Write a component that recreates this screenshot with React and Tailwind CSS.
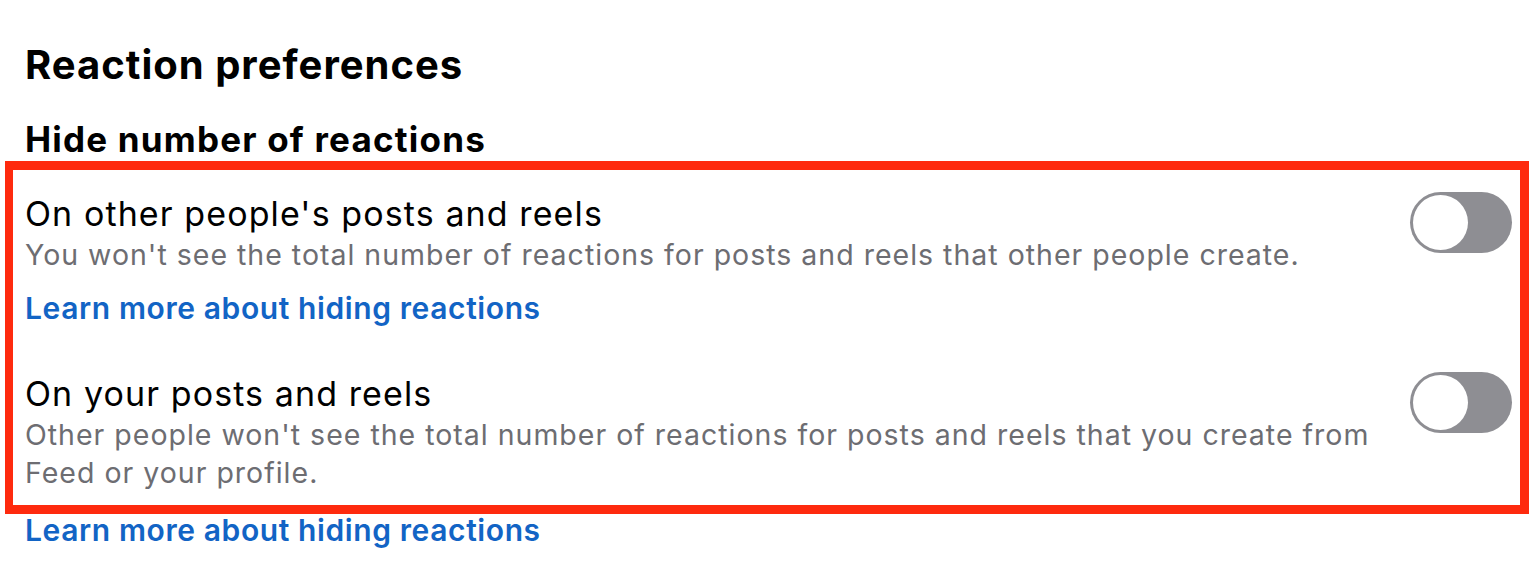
import React from 'react'

function Toggle() {
  return (
    <div className="w-[102px] h-[61px] rounded-full bg-[#8e8e93] p-[3px] shrink-0">
      <div className="w-[55px] h-[55px] rounded-full bg-white" />
    </div>
  )
}

const linkCls = 'block text-[30px] font-semibold tracking-[0.6px] text-[#1264c5]'

export default function App() {
  return (
    <div className="w-[1536px] h-[568px] bg-white overflow-hidden font-['Inter',sans-serif] text-black">
      {/* Headings */}
      <div className="pl-[25px] pt-[41px]">
        <h1 className="text-[40px] font-bold leading-[48px] tracking-[1px]">Reaction preferences</h1>
        <h2 className="text-[35px] font-bold leading-[44px] mt-[28px] tracking-[1.2px]">Hide number of reactions</h2>
      </div>

      {/* Highlighted block */}
      <div className="ml-[5px] w-[1524px] h-[353px] border-[9px] border-l-[8px] border-[#fe2a0e] pl-[12px] pr-[8px]">
        <div className="flex justify-between items-start pt-[22px]">
          <div>
            <p className="text-[34px] leading-[44px] tracking-[1.1px]">On other people's posts and reels</p>
            <p className="text-[28.5px] leading-[38px] tracking-[1px] text-[#6d6d72]">
              You won't see the total number of reactions for posts and reels that other people create.
            </p>
          </div>
          <Toggle />
        </div>
        <a className={`${linkCls} leading-[38px] mt-[15px]`}>Learn more about hiding reactions</a>

        <div className="flex justify-between items-start mt-[45px]">
          <div className="max-w-[1380px]">
            <p className="text-[34px] leading-[44px] tracking-[1.1px]">On your posts and reels</p>
            <p className="text-[28.5px] leading-[38px] tracking-[1px] text-[#6d6d72]">
              Other people won't see the total number of reactions for posts and reels that you create from Feed or your profile.
            </p>
          </div>
          <Toggle />
        </div>
      </div>
      <a className={`${linkCls} leading-[32px] pl-[25px]`}>Learn more about hiding reactions</a>
    </div>
  )
}
